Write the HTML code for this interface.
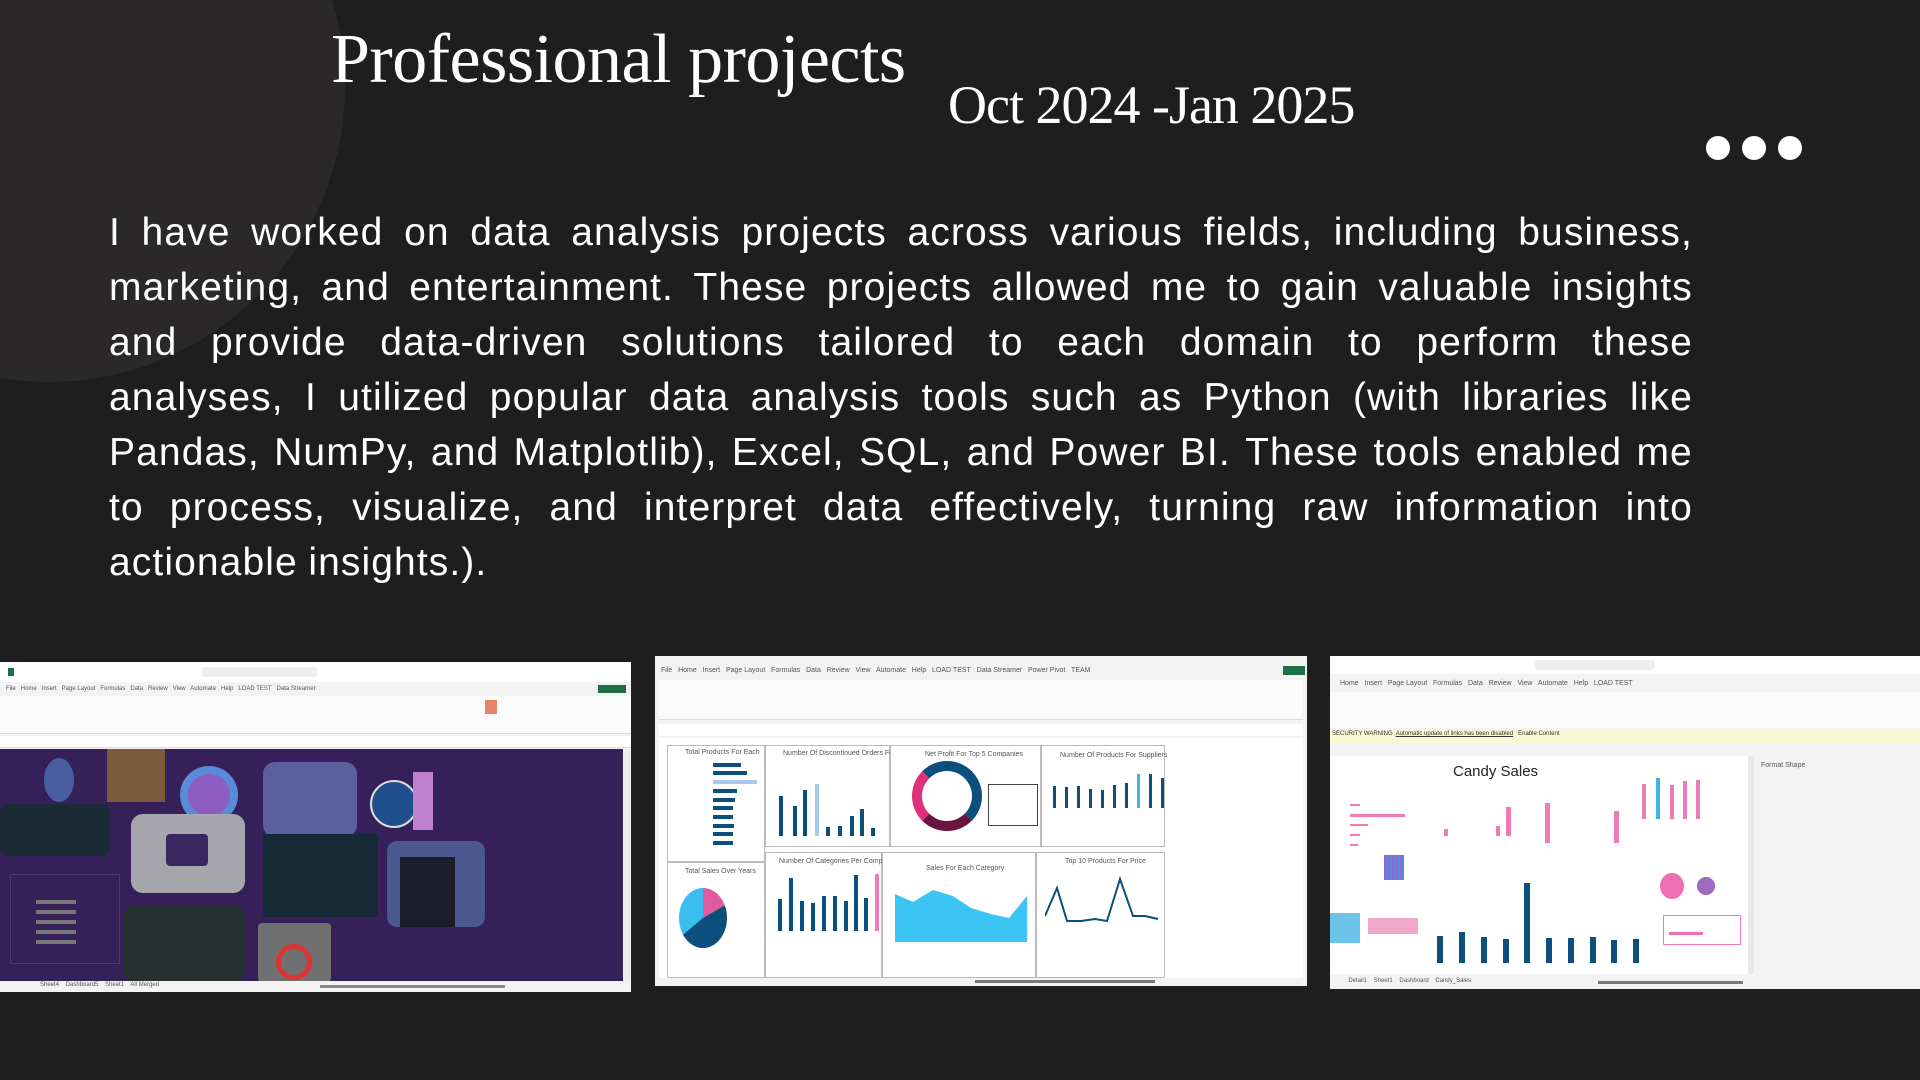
<!DOCTYPE html>
<html><head><meta charset="utf-8"><style>
*{margin:0;padding:0;box-sizing:border-box}
body{width:1920px;height:1080px;background:#1f1e1e;position:relative;overflow:hidden;font-family:"Liberation Sans",sans-serif}
.circ{position:absolute;left:-247px;top:-210px;width:592px;height:592px;border-radius:50%;background:#2a2828}
h1{position:absolute;left:331px;top:20px;font-family:"Liberation Serif",serif;font-weight:normal;font-size:70px;color:#fff;letter-spacing:-0.5px}
.date{position:absolute;left:948px;top:74px;font-family:"Liberation Serif",serif;font-size:54px;color:#fff;letter-spacing:-1px}
.dot{position:absolute;top:136px;width:24px;height:24px;border-radius:50%;background:#fff}
.p{position:absolute;left:109px;top:205px;width:1584px;font-size:39px;line-height:55px;color:#fff;letter-spacing:1.1px}
.p div{white-space:nowrap;display:flex;justify-content:space-between}
.p div.l{justify-content:flex-start;gap:0.27em}
.sh{position:absolute;overflow:hidden;background:#f3f3f3}
.a{position:absolute}
.bar{position:absolute;background:#0d4f7c}
.pn{position:absolute;border:1px solid #bbb;background:#fff}
.t{position:absolute;font-size:7px;color:#555;white-space:nowrap}
</style></head><body>
<div class="circ"></div>
<h1>Professional projects</h1>
<div class="date">Oct 2024 -Jan 2025</div>
<div class="dot" style="left:1706px"></div><div class="dot" style="left:1742px"></div><div class="dot" style="left:1778px"></div>
<div class="p">
<div><span>I</span><span>have</span><span>worked</span><span>on</span><span>data</span><span>analysis</span><span>projects</span><span>across</span><span>various</span><span>fields,</span><span>including</span><span>business,</span></div>
<div><span>marketing,</span><span>and</span><span>entertainment.</span><span>These</span><span>projects</span><span>allowed</span><span>me</span><span>to</span><span>gain</span><span>valuable</span><span>insights</span></div>
<div><span>and</span><span>provide</span><span>data-driven</span><span>solutions</span><span>tailored</span><span>to</span><span>each</span><span>domain</span><span>to</span><span>perform</span><span>these</span></div>
<div><span>analyses,</span><span>I</span><span>utilized</span><span>popular</span><span>data</span><span>analysis</span><span>tools</span><span>such</span><span>as</span><span>Python</span><span>(with</span><span>libraries</span><span>like</span></div>
<div><span>Pandas,</span><span>NumPy,</span><span>and</span><span>Matplotlib),</span><span>Excel,</span><span>SQL,</span><span>and</span><span>Power</span><span>BI.</span><span>These</span><span>tools</span><span>enabled</span><span>me</span></div>
<div><span>to</span><span>process,</span><span>visualize,</span><span>and</span><span>interpret</span><span>data</span><span>effectively,</span><span>turning</span><span>raw</span><span>information</span><span>into</span></div>
<div class="l"><span>actionable</span><span>insights.).</span></div>
</div>

<!-- screenshot 1 -->
<div class="sh" style="left:0;top:662px;width:631px;height:330px">
 <div class="a" style="left:0;top:0;width:631px;height:20px;background:#fff"></div>
 <div class="a" style="left:8px;top:6px;width:6px;height:8px;background:#1d7044"></div>
 <div class="a" style="left:202px;top:5px;width:115px;height:10px;background:#eee;border-radius:3px"></div>
 <div class="t" style="left:6px;top:24px;font-size:6px">File&nbsp;&nbsp; Home&nbsp;&nbsp; Insert&nbsp;&nbsp; Page Layout&nbsp;&nbsp; Formulas&nbsp;&nbsp; Data&nbsp;&nbsp; Review&nbsp;&nbsp; View&nbsp;&nbsp; Automate&nbsp;&nbsp; Help&nbsp;&nbsp; LOAD TEST&nbsp;&nbsp; Data Streamer</div>
 <div class="a" style="left:598px;top:23px;width:28px;height:8px;background:#1d7044"></div>
 <div class="a" style="left:0;top:34px;width:631px;height:38px;background:#fbfbfb;border-bottom:1px solid #ddd"></div>
 <div class="a" style="left:485px;top:38px;width:12px;height:14px;background:#e8836a"></div>
 <div class="a" style="left:0;top:74px;width:631px;height:12px;background:#fff;border-bottom:1px solid #ddd"></div>
 <div class="a" style="left:0;top:87px;width:623px;height:232px;background:#35205a"></div>
 <div class="a" style="left:624px;top:87px;width:7px;height:232px;background:#eee"></div>
 <div class="a" style="left:107px;top:87px;width:58px;height:53px;background:#7a5a3a"></div>
 <div class="a" style="left:44px;top:96px;width:30px;height:44px;border-radius:50%;background:#4a5da0"></div>
 <div class="a" style="left:180px;top:104px;width:58px;height:58px;border-radius:50%;background:#8d5cc0;border:8px solid #5b8ad8"></div>
 <div class="a" style="left:263px;top:100px;width:94px;height:75px;border-radius:12px;background:#5b5f9e"></div>
 <div class="a" style="left:370px;top:118px;width:48px;height:48px;border-radius:50%;background:#1f4e8c;border:2px solid #ddd"></div>
 <div class="a" style="left:413px;top:110px;width:20px;height:58px;background:#c080d0"></div>
 <div class="a" style="left:0;top:142px;width:110px;height:52px;border-radius:8px;background:#1a2b35"></div>
 <div class="a" style="left:131px;top:152px;width:114px;height:79px;border-radius:12px;background:#a8a6ad"></div>
 <div class="a" style="left:166px;top:172px;width:42px;height:32px;border-radius:4px;background:#3a2660"></div>
 <div class="a" style="left:263px;top:172px;width:115px;height:83px;background:#152a36"></div>
 <div class="a" style="left:387px;top:179px;width:98px;height:86px;border-radius:10px;background:#4a5890"></div>
 <div class="a" style="left:400px;top:195px;width:55px;height:70px;background:#1c1c2a"></div>
 <div class="a" style="left:124px;top:243px;width:121px;height:77px;border-radius:10px;background:#26322f"></div>
 <div class="a" style="left:258px;top:261px;width:73px;height:59px;border-radius:4px;background:#707070"></div>
 <div class="a" style="left:276px;top:282px;width:36px;height:36px;border-radius:50%;border:5px solid #d33"></div>
 <div class="a" style="left:10px;top:212px;width:110px;height:90px;border:1px solid #4b3a70"></div>
 <div class="a" style="left:36px;top:238px;width:40px;height:50px;background:repeating-linear-gradient(#777 0 4px,transparent 4px 10px)"></div>
 <div class="a" style="left:0;top:319px;width:631px;height:11px;background:#f3f3f3"></div>
 <div class="t" style="left:40px;top:320px;font-size:6px">Sheet4&nbsp;&nbsp;&nbsp; Dashboard5&nbsp;&nbsp;&nbsp; Sheet1&nbsp;&nbsp;&nbsp; All Merged</div>
 <div class="a" style="left:320px;top:323px;width:185px;height:3px;background:#888"></div>
</div>

<!-- screenshot 2 -->
<div class="sh" style="left:655px;top:656px;width:652px;height:330px">
 <div class="t" style="left:6px;top:11px">File&nbsp;&nbsp; Home&nbsp;&nbsp; Insert&nbsp;&nbsp; Page Layout&nbsp;&nbsp; Formulas&nbsp;&nbsp; Data&nbsp;&nbsp; Review&nbsp;&nbsp; View&nbsp;&nbsp; Automate&nbsp;&nbsp; Help&nbsp;&nbsp; LOAD TEST&nbsp;&nbsp; Data Streamer&nbsp;&nbsp; Power Pivot&nbsp;&nbsp; TEAM</div>
 <div class="a" style="left:628px;top:10px;width:22px;height:9px;background:#1d7044"></div>
 <div class="a" style="left:4px;top:24px;width:644px;height:40px;background:#fbfbfb;border-bottom:1px solid #ddd"></div>
 <div class="a" style="left:4px;top:68px;width:644px;height:12px;background:#fff"></div>
 <div class="a" style="left:4px;top:82px;width:644px;height:240px;background:#fff"></div>
 <div class="pn" style="left:12px;top:89px;width:98px;height:117px"></div>
 <div class="t" style="left:30px;top:93px;font-size:7px">Total Products For Each</div>
 <div class="bar" style="left:58px;top:107px;width:28px;height:4px"></div>
 <div class="bar" style="left:58px;top:115px;width:34px;height:4px"></div>
 <div class="a" style="left:58px;top:124px;width:44px;height:4px;background:#a9c9ea"></div>
 <div class="bar" style="left:58px;top:133px;width:24px;height:4px"></div>
 <div class="bar" style="left:58px;top:142px;width:22px;height:4px"></div>
 <div class="bar" style="left:58px;top:150px;width:20px;height:4px"></div>
 <div class="bar" style="left:58px;top:159px;width:20px;height:4px"></div>
 <div class="bar" style="left:58px;top:168px;width:21px;height:4px"></div>
 <div class="bar" style="left:58px;top:176px;width:20px;height:4px"></div>
 <div class="bar" style="left:58px;top:185px;width:20px;height:4px"></div>
 <div class="pn" style="left:110px;top:89px;width:125px;height:102px"></div>
 <div class="t" style="left:128px;top:94px">Number Of Discontinued Orders For</div>
 <div class="bar" style="left:124px;top:140px;width:4px;height:40px"></div>
 <div class="bar" style="left:138px;top:150px;width:4px;height:30px"></div>
 <div class="bar" style="left:148px;top:134px;width:4px;height:46px"></div>
 <div class="a" style="left:160px;top:128px;width:4px;height:52px;background:#a9c9ea"></div>
 <div class="bar" style="left:171px;top:171px;width:4px;height:9px"></div>
 <div class="bar" style="left:183px;top:170px;width:4px;height:10px"></div>
 <div class="bar" style="left:195px;top:160px;width:4px;height:20px"></div>
 <div class="bar" style="left:205px;top:153px;width:4px;height:27px"></div>
 <div class="bar" style="left:216px;top:172px;width:4px;height:8px"></div>
 <div class="pn" style="left:235px;top:89px;width:151px;height:102px"></div>
 <div class="t" style="left:270px;top:95px">Net Profit For Top 5 Companies</div>
 <div class="a" style="left:257px;top:105px;width:70px;height:70px;border-radius:50%;border:10px solid #0d4f7c;border-left-color:#e0307a;border-bottom-color:#6a1440"></div>
 <div class="a" style="left:333px;top:128px;width:50px;height:42px;border:1px solid #444"></div>
 <div class="pn" style="left:386px;top:89px;width:124px;height:102px"></div>
 <div class="t" style="left:405px;top:96px">Number Of Products For Suppliers</div>
 <div class="bar" style="left:398px;top:130px;width:3px;height:22px"></div>
 <div class="bar" style="left:410px;top:131px;width:3px;height:21px"></div>
 <div class="bar" style="left:422px;top:130px;width:3px;height:22px"></div>
 <div class="bar" style="left:434px;top:133px;width:3px;height:19px"></div>
 <div class="bar" style="left:446px;top:134px;width:3px;height:18px"></div>
 <div class="bar" style="left:458px;top:129px;width:3px;height:23px"></div>
 <div class="bar" style="left:470px;top:127px;width:3px;height:25px"></div>
 <div class="a" style="left:482px;top:118px;width:3px;height:34px;background:#3cb4e8"></div>
 <div class="bar" style="left:494px;top:118px;width:3px;height:34px"></div>
 <div class="bar" style="left:506px;top:122px;width:3px;height:30px"></div>
 <div class="pn" style="left:12px;top:206px;width:98px;height:116px"></div>
 <div class="t" style="left:30px;top:212px">Total Sales Over Years</div>
 <div class="a" style="left:24px;top:232px;width:48px;height:60px;border-radius:50%;background:conic-gradient(#e05aa0 0 60deg,#0d4f7c 60deg 230deg,#3cbdf0 230deg)"></div>
 <div class="pn" style="left:110px;top:196px;width:117px;height:126px"></div>
 <div class="t" style="left:124px;top:202px">Number Of Categories Per Company</div>
 <div class="bar" style="left:123px;top:243px;width:4px;height:32px"></div>
 <div class="bar" style="left:134px;top:222px;width:4px;height:53px"></div>
 <div class="bar" style="left:145px;top:245px;width:4px;height:30px"></div>
 <div class="bar" style="left:156px;top:247px;width:4px;height:28px"></div>
 <div class="bar" style="left:167px;top:240px;width:4px;height:35px"></div>
 <div class="bar" style="left:178px;top:240px;width:4px;height:35px"></div>
 <div class="bar" style="left:189px;top:245px;width:4px;height:30px"></div>
 <div class="bar" style="left:199px;top:219px;width:4px;height:56px"></div>
 <div class="bar" style="left:209px;top:242px;width:4px;height:33px"></div>
 <div class="a" style="left:220px;top:218px;width:4px;height:57px;background:#ef7ab8"></div>
 <div class="pn" style="left:227px;top:196px;width:154px;height:126px"></div>
 <div class="t" style="left:271px;top:209px">Sales For Each Category</div>
 <svg class="a" style="left:240px;top:220px" width="132" height="66"><polygon points="0,18 18,26 38,14 58,20 76,32 96,38 114,42 132,20 132,66 0,66" fill="#3cc4f5"/></svg>
 <div class="pn" style="left:381px;top:196px;width:129px;height:126px"></div>
 <div class="t" style="left:410px;top:202px">Top 10 Products For Price</div>
 <svg class="a" style="left:390px;top:215px" width="115" height="60"><polyline points="0,45 12,17 22,50 36,50 50,48 62,50 75,8 88,45 100,45 113,48" fill="none" stroke="#0d4f7c" stroke-width="2"/></svg>
 <div class="a" style="left:4px;top:322px;width:644px;height:8px;background:#f3f3f3"></div>
 <div class="a" style="left:320px;top:324px;width:180px;height:3px;background:#777"></div>
</div>

<!-- screenshot 3 -->
<div class="sh" style="left:1330px;top:656px;width:590px;height:333px">
 <div class="a" style="left:0;top:0;width:590px;height:18px;background:#fff"></div>
 <div class="a" style="left:205px;top:4px;width:120px;height:10px;background:#eee;border-radius:3px"></div>
 <div class="t" style="left:10px;top:24px">Home&nbsp;&nbsp; Insert&nbsp;&nbsp; Page Layout&nbsp;&nbsp; Formulas&nbsp;&nbsp; Data&nbsp;&nbsp; Review&nbsp;&nbsp; View&nbsp;&nbsp; Automate&nbsp;&nbsp; Help&nbsp;&nbsp; LOAD TEST</div>
 <div class="a" style="left:0;top:36px;width:590px;height:36px;background:#fbfbfb"></div>
 <div class="a" style="left:0;top:73px;width:590px;height:14px;background:#fbf7d3"></div>
 <div class="t" style="left:2px;top:75px;font-size:6px;color:#333">SECURITY WARNING&nbsp; <u>Automatic update of links has been disabled</u>&nbsp;&nbsp; Enable Content</div>
 <div class="a" style="left:0;top:100px;width:418px;height:218px;background:#fff"></div>
 <div class="t" style="left:123px;top:107px;font-size:15px;color:#222">Candy Sales</div>
 <div class="a" style="left:20px;top:158px;width:55px;height:3px;background:#ef7ab8"></div>
 <div class="a" style="left:20px;top:148px;width:10px;height:2px;background:#ef7ab8"></div>
 <div class="a" style="left:20px;top:168px;width:18px;height:2px;background:#ef7ab8"></div>
 <div class="a" style="left:20px;top:178px;width:10px;height:2px;background:#ef7ab8"></div>
 <div class="a" style="left:20px;top:188px;width:8px;height:2px;background:#ef7ab8"></div>
 <div class="a" style="left:114px;top:173px;width:4px;height:7px;background:#ef7ab8"></div>
 <div class="a" style="left:166px;top:170px;width:4px;height:10px;background:#ef7ab8"></div>
 <div class="a" style="left:176px;top:151px;width:5px;height:29px;background:#ef7ab8"></div>
 <div class="a" style="left:215px;top:147px;width:5px;height:40px;background:#ef7ab8"></div>
 <div class="a" style="left:284px;top:155px;width:5px;height:32px;background:#ef7ab8"></div>
 <div class="a" style="left:312px;top:128px;width:4px;height:35px;background:#ef7ab8"></div>
 <div class="a" style="left:326px;top:122px;width:4px;height:41px;background:#3cb4e8"></div>
 <div class="a" style="left:340px;top:129px;width:4px;height:34px;background:#ef7ab8"></div>
 <div class="a" style="left:353px;top:125px;width:4px;height:38px;background:#ef7ab8"></div>
 <div class="a" style="left:366px;top:124px;width:4px;height:39px;background:#ef7ab8"></div>
 <div class="a" style="left:54px;top:199px;width:20px;height:25px;background:repeating-linear-gradient(90deg,#8e6ad0 0 2px,#5a8adf 2px 4px)"></div>
 <div class="a" style="left:0;top:257px;width:30px;height:30px;background:#6bc3ea"></div>
 <div class="a" style="left:38px;top:262px;width:50px;height:16px;background:#f0a8cc"></div>
 <div class="bar" style="left:107px;top:280px;width:6px;height:27px"></div>
 <div class="bar" style="left:129px;top:276px;width:6px;height:31px"></div>
 <div class="bar" style="left:151px;top:281px;width:6px;height:26px"></div>
 <div class="bar" style="left:173px;top:283px;width:6px;height:24px"></div>
 <div class="bar" style="left:194px;top:227px;width:6px;height:80px"></div>
 <div class="bar" style="left:216px;top:282px;width:6px;height:25px"></div>
 <div class="bar" style="left:238px;top:282px;width:6px;height:25px"></div>
 <div class="bar" style="left:260px;top:281px;width:6px;height:26px"></div>
 <div class="bar" style="left:281px;top:284px;width:6px;height:23px"></div>
 <div class="bar" style="left:303px;top:283px;width:6px;height:24px"></div>
 <div class="a" style="left:330px;top:217px;width:24px;height:26px;border-radius:50%;background:#ef6fb5"></div>
 <div class="a" style="left:367px;top:221px;width:18px;height:18px;border-radius:50%;background:#9d6ac0"></div>
 <div class="a" style="left:333px;top:259px;width:78px;height:30px;border:1px solid #ef7ab8"></div>
 <div class="a" style="left:339px;top:276px;width:34px;height:3px;background:#ef6fb5"></div>
 <div class="a" style="left:418px;top:100px;width:6px;height:218px;background:#e8e8e8"></div>
 <div class="t" style="left:431px;top:106px">Format Shape</div>
 <div class="t" style="left:0;top:322px;font-size:6px">&nbsp;&nbsp;&nbsp;&nbsp;&nbsp;&nbsp;&nbsp;&nbsp;&nbsp;&nbsp; Detail1&nbsp;&nbsp;&nbsp; Sheet1&nbsp;&nbsp;&nbsp; Dashboard&nbsp;&nbsp;&nbsp; Candy_Sales</div>
 <div class="a" style="left:268px;top:325px;width:145px;height:3px;background:#777"></div>
</div>
</body></html>
